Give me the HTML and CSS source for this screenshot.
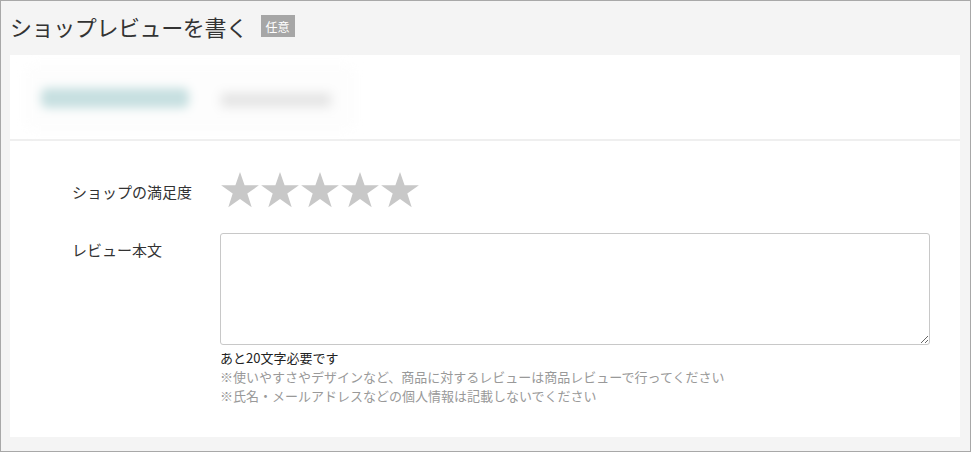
FILE: index.html
```html
<!DOCTYPE html>
<html>
<head>
    <meta charset="utf-8">
    <title>ショップレビューを書く</title>
    <link rel="stylesheet" href="styles.css">
</head>
<body>
    <div id="frame">
        <div class="heading">
            <h1>ショップレビューを書く</h1>
            <span class="badge">任意</span>
        </div>

        <div class="panel">
            <div class="shop-info">
                <div class="blur-box">
                    <span class="blur-logo"></span>
                    <span class="blur-name"></span>
                </div>
            </div>

            <div class="form">
                <div class="row">
                    <div class="label label-stars">ショップの満足度</div>
                    <div class="stars">
                        <svg class="star" viewBox="0 0 40 38"><path d="M20 1 L24.6 14.3 L38.9 14.3 L27.3 22.6 L31.7 36.3 L20 27.9 L8.3 36.3 L12.7 22.6 L1.1 14.3 L15.4 14.3 Z"/></svg>
                        <svg class="star" viewBox="0 0 40 38"><path d="M20 1 L24.6 14.3 L38.9 14.3 L27.3 22.6 L31.7 36.3 L20 27.9 L8.3 36.3 L12.7 22.6 L1.1 14.3 L15.4 14.3 Z"/></svg>
                        <svg class="star" viewBox="0 0 40 38"><path d="M20 1 L24.6 14.3 L38.9 14.3 L27.3 22.6 L31.7 36.3 L20 27.9 L8.3 36.3 L12.7 22.6 L1.1 14.3 L15.4 14.3 Z"/></svg>
                        <svg class="star" viewBox="0 0 40 38"><path d="M20 1 L24.6 14.3 L38.9 14.3 L27.3 22.6 L31.7 36.3 L20 27.9 L8.3 36.3 L12.7 22.6 L1.1 14.3 L15.4 14.3 Z"/></svg>
                        <svg class="star" viewBox="0 0 40 38"><path d="M20 1 L24.6 14.3 L38.9 14.3 L27.3 22.6 L31.7 36.3 L20 27.9 L8.3 36.3 L12.7 22.6 L1.1 14.3 L15.4 14.3 Z"/></svg>
                    </div>
                </div>

                <div class="row">
                    <div class="label label-text">レビュー本文</div>
                    <div class="field">
                        <textarea id="review"></textarea>
                        <p class="count">あと20文字必要です</p>
                        <p class="note">※使いやすさやデザインなど、商品に対するレビューは商品レビューで行ってください</p>
                        <p class="note">※氏名・メールアドレスなどの個人情報は記載しないでください</p>
                    </div>
                </div>
            </div>
        </div>
    </div>
</body>
</html>
```

FILE: styles.css
```css
* {
    box-sizing: border-box;
}

body {
    font-family: "Noto Sans CJK JP", "Noto Sans", sans-serif;
    margin: 0;
    padding: 0;
    color: #333;
}

#frame {
    width: 971px;
    height: 452px;
    border: 1px solid #a8a8a8;
    background-color: #f4f4f4;
    padding: 0 10px 0 9px;
}

.heading {
    display: flex;
    align-items: center;
    height: 54px;
    padding-bottom: 4px;
}

h1 {
    margin: 0;
    font-size: 22px;
    font-weight: normal;
    color: #333;
    letter-spacing: -0.4px;
}

.badge {
    display: inline-flex;
    align-items: center;
    justify-content: center;
    width: 34px;
    height: 22px;
    margin-left: 13px;
    background-color: #a6a6a6;
    color: #fff;
    font-size: 12px;
}

.panel {
    background-color: #fff;
    height: 382px;
}

.shop-info {
    height: 86px;
    border-bottom: 2px solid #efefef;
    padding: 14px 0 0 20px;
}

.blur-box {
    display: flex;
    align-items: center;
    width: 320px;
    height: 58px;
    background-color: #fdfdfd;
    box-shadow: 0 0 8px 4px #fdfdfd;
    filter: blur(4px);
}

.blur-logo {
    display: block;
    width: 148px;
    height: 20px;
    margin-left: 11px;
    background-color: #c6dfe0;
    border-radius: 6px;
    filter: blur(2px);
}

.blur-name {
    display: block;
    width: 110px;
    height: 14px;
    margin-left: 32px;
    margin-top: 3px;
    background-color: #e4e4e4;
    filter: blur(3px);
}

.form {
    padding: 30px 30px 0 62px;
}

.row {
    display: flex;
    margin-bottom: 24px;
}

.label {
    width: 148px;
    flex-shrink: 0;
    font-size: 15px;
    color: #333;
}

.label-stars {
    padding-top: 10px;
}

.label-text {
    padding-top: 6px;
}

.stars {
    display: flex;
}

.star {
    display: block;
    width: 40px;
    height: 38px;
    fill: #c8c8c8;
}

.field {
    flex: 1;
}

#review {
    display: block;
    width: 100%;
    height: 112px;
    border: 1px solid #c8c8c8;
    border-radius: 3px;
    resize: vertical;
    font-family: inherit;
}

.count {
    margin: 3px 0 0;
    font-size: 13px;
    line-height: 19px;
    color: #222;
}

.note {
    margin: 0;
    font-size: 13px;
    line-height: 19px;
    color: #999;
}
```
